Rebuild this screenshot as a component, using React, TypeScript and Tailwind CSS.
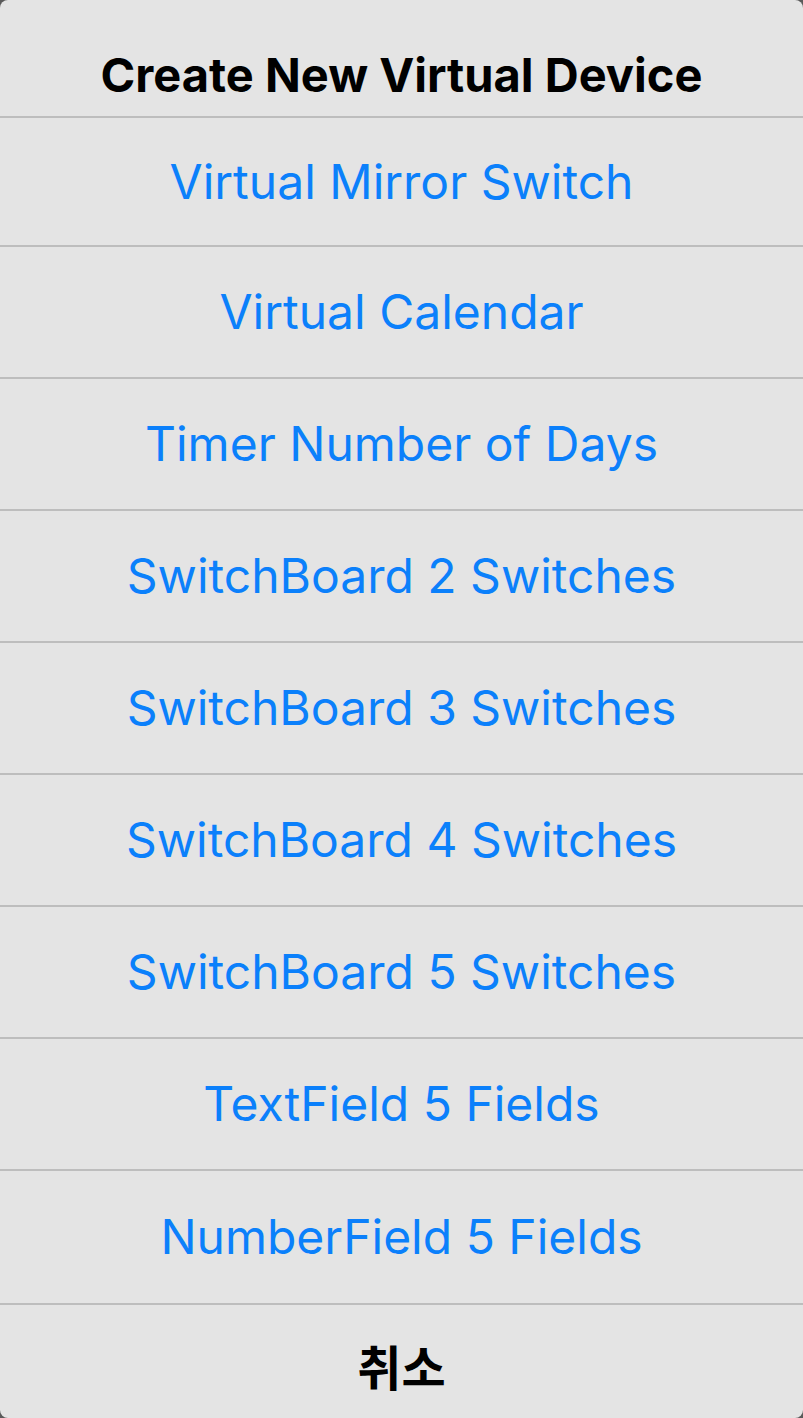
const items = [
  "Virtual Mirror Switch",
  "Virtual Calendar",
  "Timer Number of Days",
  "SwitchBoard 2 Switches",
  "SwitchBoard 3 Switches",
  "SwitchBoard 4 Switches",
  "SwitchBoard 5 Switches",
  "TextField 5 Fields",
  "NumberField 5 Fields",
];

export default function App() {
  return (
    <main className="h-[1418px] w-[803px] overflow-hidden bg-[#5a5a5a] font-['Inter','Noto_Sans_CJK_KR',sans-serif]">
      <div className="flex h-full flex-col overflow-hidden rounded-[8px] bg-[#e4e4e4]">
        <div className="flex h-[116px] shrink-0 items-center justify-center pt-[34px] text-[47px] font-bold text-black">
          Create New Virtual Device
        </div>
        {items.map((label, i) => (
          <button
            key={label}
            type="button"
            className={`flex shrink-0 items-center justify-center border-t-2 border-[#bdbdbd] text-[48px] text-[#0b80fb] ${
              i === 0 ? "h-[129px]" : i === items.length - 1 ? "h-[134px]" : "h-[132px]"
            }`}
          >
            {label}
          </button>
        ))}
        <button
          type="button"
          className="flex flex-1 items-center justify-center border-t-2 border-[#bdbdbd] pt-[14px] text-[48px] font-bold text-black"
        >
          취소
        </button>
      </div>
    </main>
  );
}
